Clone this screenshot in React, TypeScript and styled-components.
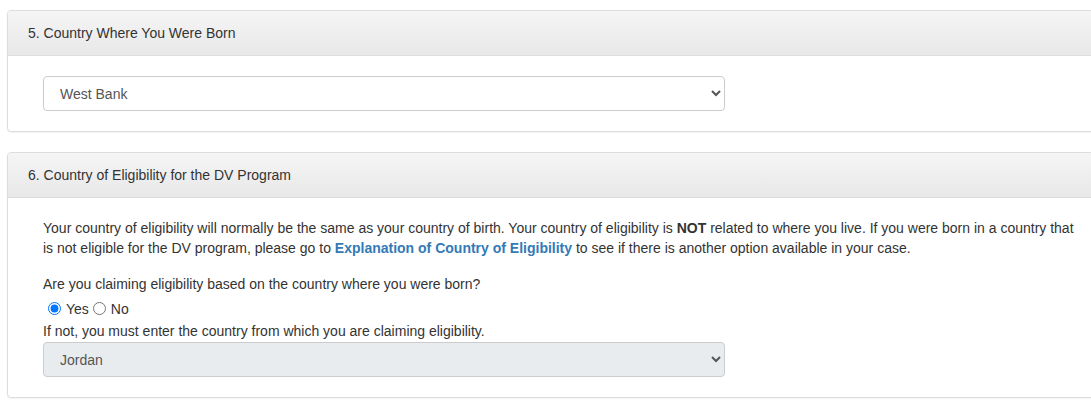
import React from "react";
import styled, { createGlobalStyle } from "styled-components";

const GlobalStyle = createGlobalStyle`
  html, body {
    margin: 0;
    padding: 0;
    background: #fff;
    overflow: hidden;
  }

  body {
    font-family: "Liberation Sans", Arial, Helvetica, sans-serif;
    font-size: 14px;
    line-height: 20px;
    color: #333;
  }

  * {
    box-sizing: border-box;
  }
`;

const Page = styled.div`
  display: flex;
  flex-direction: column;
  gap: 20px;
  padding: 10px 0 0 7px;
  width: 1091px;
  height: 408px;
  overflow: hidden;
`;

const Panel = styled.section`
  flex-shrink: 0;
  width: 1112px;
  background: #fff;
  border: 1px solid #ddd;
  border-radius: 4px;
  box-shadow: 0 1px 2px rgba(0, 0, 0, 0.05);
`;

const PanelHeading = styled.div`
  display: flex;
  align-items: center;
  height: 45px;
  padding: 0 20px;
  border-bottom: 1px solid #ddd;
  border-radius: 3px 3px 0 0;
  background-image: linear-gradient(to bottom, #f5f5f5 0%, #e8e8e8 100%);
  color: #333;
  font-size: 14px;
`;

const PanelBody = styled.div`
  display: flex;
  flex-direction: column;
  padding: 20px 35px;
`;

const Select = styled.select<{ $muted?: boolean }>`
  width: 682px;
  height: 35px;
  padding: 0 12px 0 12px;
  font-family: inherit;
  font-size: 14px;
  color: #555;
  background-color: ${(p) => (p.$muted ? "#e9ecef" : "#fff")};
  border: 1px solid #ccc;
  border-radius: 4px;
  opacity: 1;
  outline: none;

  &:disabled {
    color: #555;
    opacity: 1;
  }
`;

const Paragraph = styled.p`
  width: 1040px;
  margin: 0 0 16px;
  line-height: 20px;
`;

const Link = styled.a`
  color: #337ab7;
  font-weight: bold;
  text-decoration: none;
`;

const Question = styled.div`
  line-height: 20px;
`;

const RadioRow = styled.div`
  display: flex;
  align-items: center;
  gap: 4px;
  height: 27px;
  padding: 3px 0 1px 5px;
`;

const RadioLabel = styled.label`
  display: inline-flex;
  align-items: center;
  gap: 5px;
  line-height: 20px;
`;

const Radio = styled.input`
  width: 13px;
  height: 13px;
  margin: 0;
`;

const Hint = styled.div`
  line-height: 20px;
  margin-bottom: 1px;
`;

export default function App() {
  return (
    <>
      <GlobalStyle />
      <Page>
        <Panel>
          <PanelHeading>5. Country Where You Were Born</PanelHeading>
          <PanelBody>
            <Select defaultValue="PS">
              <option value="PS">West Bank</option>
            </Select>
          </PanelBody>
        </Panel>

        <Panel>
          <PanelHeading>6. Country of Eligibility for the DV Program</PanelHeading>
          <PanelBody>
            <Paragraph>
              Your country of eligibility will normally be the same as your
              country of birth. Your country of eligibility is <b>NOT</b>{" "}
              related to where you live. If you were born in a country that is
              not eligible for the DV program, please go to{" "}
              <Link href="#">Explanation of Country of Eligibility</Link> to
              see if there is another option available in your case.
            </Paragraph>
            <Question>
              Are you claiming eligibility based on the country where you were
              born?
            </Question>
            <RadioRow>
              <RadioLabel>
                <Radio type="radio" name="born" defaultChecked />
                Yes
              </RadioLabel>
              <RadioLabel>
                <Radio type="radio" name="born" />
                No
              </RadioLabel>
            </RadioRow>
            <Hint>If not, you must enter the country from which you are claiming eligibility.</Hint>
            <Select $muted disabled defaultValue="JO">
              <option value="JO">Jordan</option>
            </Select>
          </PanelBody>
        </Panel>
      </Page>
    </>
  );
}
